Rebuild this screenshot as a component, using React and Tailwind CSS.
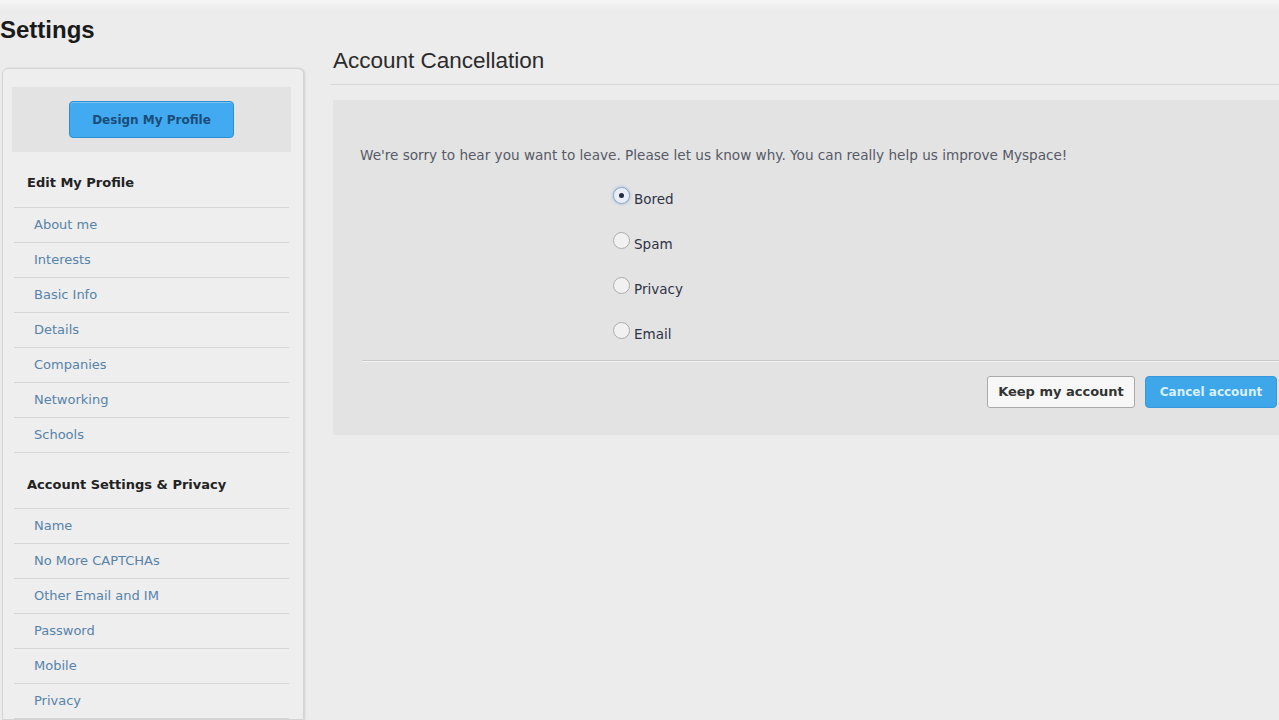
import React from "react";

const editItems = ["About me", "Interests", "Basic Info", "Details", "Companies", "Networking", "Schools"];
const accountItems = ["Name", "No More CAPTCHAs", "Other Email and IM", "Password", "Mobile", "Privacy"];
const reasons = ["Bored", "Spam", "Privacy", "Email"];

function Row({ label }) {
  return (
    <div className="h-[35px] border-t border-[#d6d6d6] flex items-center pl-[20px] text-[13px] text-[#5683aa]">
      {label}
    </div>
  );
}

function Radio({ checked }) {
  return (
    <div
      className={
        "w-[17px] h-[17px] rounded-full border flex items-center justify-center shrink-0 " +
        (checked
          ? "border-[#8fa9c9] bg-[#e9eef6] shadow-[0_0_3px_rgba(90,140,210,0.6)]"
          : "border-[#ababab] bg-[#f1f1f1]")
      }
    >
      {checked && <div className="w-[5px] h-[5px] rounded-full bg-[#1f2d45]" />}
    </div>
  );
}

export default function App() {
  return (
    <div
      className="w-[1279px] h-[720px] overflow-hidden bg-[linear-gradient(#f7f7f7_0px,#ececec_10px)] flex"
      style={{ fontFamily: '"DejaVu Sans", Verdana, sans-serif' }}
    >
      {/* Left column */}
      <div className="w-[306px] shrink-0 flex flex-col">
        <div className="h-[68px] pt-[16px]">
          <div
            className="text-[24px] leading-[28px] font-bold text-[#1a1a1a]"
            style={{ fontFamily: '"Liberation Sans", Arial, sans-serif' }}
          >
            Settings
          </div>
        </div>
        <div className="ml-[2px] w-[302px] flex-1 bg-[#eeeeee] border border-[#d4d4d4] rounded-t-[6px] shadow-[1px_0_2px_rgba(0,0,0,0.12)] pl-[9px] pr-[12px] pt-[18px]">
          <div className="h-[65px] bg-[#e3e3e3] flex items-center justify-center">
            <div className="w-[165px] h-[37px] rounded-[4px] bg-[#41aaf0] border border-[#2e8fd2] flex items-center justify-center text-[12px] font-bold text-[#1b4d7a] shadow-[inset_0_1px_0_rgba(255,255,255,0.3)]">
              Design My Profile
            </div>
          </div>
          <div className="mx-[2px]">
            <div className="h-[55px] pt-[7px] flex items-center pl-[13px] text-[13px] font-bold text-[#222]">
              Edit My Profile
            </div>
            {editItems.map((t) => (
              <Row key={t} label={t} />
            ))}
            <div className="h-[56px] pt-[8px] border-t border-[#d6d6d6] flex items-center pl-[13px] text-[13px] font-bold text-[#222]">
              Account Settings &amp; Privacy
            </div>
            {accountItems.map((t) => (
              <Row key={t} label={t} />
            ))}
            <div className="border-t border-[#d6d6d6]" />
          </div>
        </div>
      </div>

      {/* Right column */}
      <div className="flex-1 ml-[24px] flex flex-col">
        <div className="pt-[47px] pb-[9px] border-b border-[#d8d8d8]">
          <div
            className="ml-[3px] text-[22.5px] leading-[28px] text-[#2b2b2b]"
            style={{ fontFamily: '"Liberation Sans", Arial, sans-serif' }}
          >
            Account Cancellation
          </div>
        </div>
        <div className="mt-[14px] ml-[3px] h-[336px] bg-[#e3e3e3] border-t border-[#ececec] flex flex-col">
          <div className="mt-[46px] pl-[27px] text-[13.6px] leading-[18px] text-[#555a66]">
            We're sorry to hear you want to leave. Please let us know why. You can really help us improve Myspace!
          </div>
          <div className="mt-[23px] ml-[280px] flex flex-col gap-[24px]">
            {reasons.map((r, i) => (
              <div key={r} className="flex items-start">
                <Radio checked={i === 0} />
                <div className="mt-[3px] ml-[4px] text-[13.5px] leading-[18px] text-[#2f3347]">{r}</div>
              </div>
            ))}
          </div>
          <div className="mt-[17px] ml-[29px] border-t border-[#c9c9c9] border-b-[#f2f2f2] border-b" />
          <div className="mt-[14px] flex justify-end pr-[2px] gap-[10px]">
            <div className="w-[148px] h-[32px] bg-[#f7f7f7] border border-[#a9a9a9] rounded-[3px] flex items-center justify-center text-[13px] font-bold text-[#333]">
              Keep my account
            </div>
            <div className="w-[132px] h-[32px] bg-[#3ea7ea] border border-[#3598db] rounded-[4px] flex items-center justify-center text-[12px] font-bold text-[#d9f0ff]">
              Cancel account
            </div>
          </div>
        </div>
      </div>
    </div>
  );
}
